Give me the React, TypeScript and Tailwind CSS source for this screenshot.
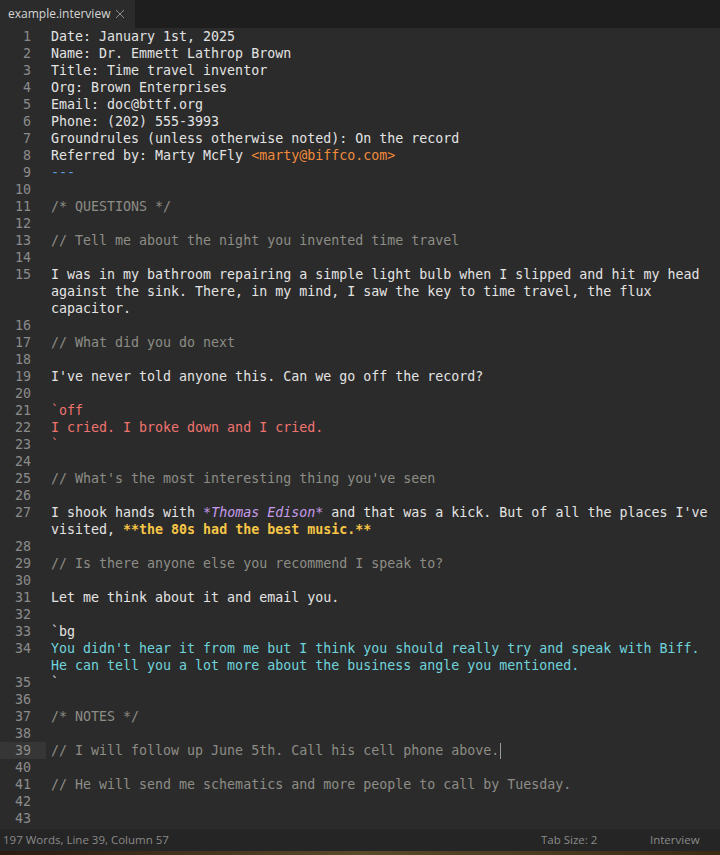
import React from "react";

// Editor view of an interview transcript: tab strip, gutter with line numbers,
// syntax-coloured rows and a status bar. Wrapped lines are written out by hand.

type Seg = { t: string; c?: string };
type Row = { n?: number; segs: Seg[]; cursor?: boolean };

const TXT = "text-[#e3e3e3]";
const CMT = "text-[#8d8d86]";
const RED = "text-[#f07470]";
const CYAN = "text-[#6fd3dc]";

const plain = (t: string): Seg[] => [{ t, c: TXT }];
const cmt = (t: string): Seg[] => [{ t, c: CMT }];

const rows: Row[] = [
  { n: 1, segs: plain("Date: January 1st, 2025") },
  { n: 2, segs: plain("Name: Dr. Emmett Lathrop Brown") },
  { n: 3, segs: plain("Title: Time travel inventor") },
  { n: 4, segs: plain("Org: Brown Enterprises") },
  { n: 5, segs: plain("Email: doc@bttf.org") },
  { n: 6, segs: plain("Phone: (202) 555-3993") },
  { n: 7, segs: plain("Groundrules (unless otherwise noted): On the record") },
  { n: 8, segs: [{ t: "Referred by: Marty McFly ", c: TXT }, { t: "<marty@biffco.com>", c: "text-[#f08a3c]" }] },
  { n: 9, segs: [{ t: "---", c: "text-[#5d9ee0]" }] },
  { n: 10, segs: [] },
  { n: 11, segs: cmt("/* QUESTIONS */") },
  { n: 12, segs: [] },
  { n: 13, segs: cmt("// Tell me about the night you invented time travel") },
  { n: 14, segs: [] },
  { n: 15, segs: plain("I was in my bathroom repairing a simple light bulb when I slipped and hit my head") },
  { segs: plain("against the sink. There, in my mind, I saw the key to time travel, the flux") },
  { segs: plain("capacitor.") },
  { n: 16, segs: [] },
  { n: 17, segs: cmt("// What did you do next") },
  { n: 18, segs: [] },
  { n: 19, segs: plain("I've never told anyone this. Can we go off the record?") },
  { n: 20, segs: [] },
  { n: 21, segs: [{ t: "`off", c: RED }] },
  { n: 22, segs: [{ t: "I cried. I broke down and I cried.", c: RED }] },
  { n: 23, segs: [{ t: "`", c: RED }] },
  { n: 24, segs: [] },
  { n: 25, segs: cmt("// What's the most interesting thing you've seen") },
  { n: 26, segs: [] },
  {
    n: 27,
    segs: [
      { t: "I shook hands with ", c: TXT },
      { t: "*", c: "text-[#c79cec]" },
      { t: "Thomas Edison", c: "text-[#c79cec] italic" },
      { t: "*", c: "text-[#c79cec]" },
      { t: " and that was a kick. But of all the places I've", c: TXT },
    ],
  },
  { segs: [{ t: "visited, ", c: TXT }, { t: "**the 80s had the best music.**", c: "text-[#f7c646] font-bold" }] },
  { n: 28, segs: [] },
  { n: 29, segs: cmt("// Is there anyone else you recommend I speak to?") },
  { n: 30, segs: [] },
  { n: 31, segs: plain("Let me think about it and email you.") },
  { n: 32, segs: [] },
  { n: 33, segs: [{ t: "`bg", c: TXT }] },
  { n: 34, segs: [{ t: "You didn't hear it from me but I think you should really try and speak with Biff.", c: CYAN }] },
  { segs: [{ t: "He can tell you a lot more about the business angle you mentioned.", c: CYAN }] },
  { n: 35, segs: [{ t: "`", c: TXT }] },
  { n: 36, segs: [] },
  { n: 37, segs: cmt("/* NOTES */") },
  { n: 38, segs: [] },
  { n: 39, segs: cmt("// I will follow up June 5th. Call his cell phone above."), cursor: true },
  { n: 40, segs: [] },
  { n: 41, segs: cmt("// He will send me schematics and more people to call by Tuesday.") },
  { n: 42, segs: [] },
  { n: 43, segs: [] },
];

function CodeRow({ row }: { row: Row }) {
  return (
    <div className="flex h-[17px] leading-[17px]">
      <div
        className={
          "w-[46px] shrink-0 pr-[15px] text-right text-[#8b8b8b] " + (row.cursor ? "bg-[#363636]" : "")
        }
      >
        {row.n ?? ""}
      </div>
      <div className="pl-[5px] whitespace-pre flex items-center">
        {row.segs.map((s, i) => (
          <span key={i} className={s.c}>
            {s.t}
          </span>
        ))}
        {row.cursor && <span className="inline-block w-px h-[16px] bg-[#9a9a9a] ml-px" />}
      </div>
    </div>
  );
}

export default function App() {
  return (
    <div className="w-[720px] h-[855px] flex flex-col bg-[#2b2b2b] overflow-hidden">
      {/* Tab strip */}
      <div className="h-[28px] flex bg-[#1e1e1e] shrink-0">
        <div
          className="w-[135px] flex items-center justify-between pl-[8px] pr-[10px] bg-[#2b2b2b] text-[12px] text-[#d6d6d6]"
          style={{ fontFamily: '"Open Sans", "Liberation Sans", sans-serif' }}
        >
          <span>example.interview</span>
          <svg width="10" height="10" viewBox="0 0 10 10" className="text-[#8a8a8a]">
            <path d="M1 1 L9 9 M9 1 L1 9" stroke="currentColor" strokeWidth="1" />
          </svg>
        </div>
      </div>

      {/* Editor body */}
      <div
        className="flex-1 pt-[0px] text-[13.3px]"
        style={{ fontFamily: '"DejaVu Sans Mono", "Liberation Mono", monospace' }}
      >
        {rows.map((r, i) => (
          <CodeRow key={i} row={r} />
        ))}
      </div>

      {/* Status bar */}
      <div
        className="h-[22px] shrink-0 flex items-center bg-[#252525] text-[11.5px] text-[#8a8a8a] pl-[3px]"
        style={{ fontFamily: '"Open Sans", "Liberation Sans", sans-serif' }}
      >
        <span>197 Words, Line 39, Column 57</span>
        <span className="ml-auto w-[109px]">Tab Size: 2</span>
        <span className="w-[70px]">Interview</span>
      </div>
      <div className="h-[4px] shrink-0 bg-gradient-to-r from-[#2a1a10] via-[#5a4a2a] to-[#3a2a14]" />
    </div>
  );
}
